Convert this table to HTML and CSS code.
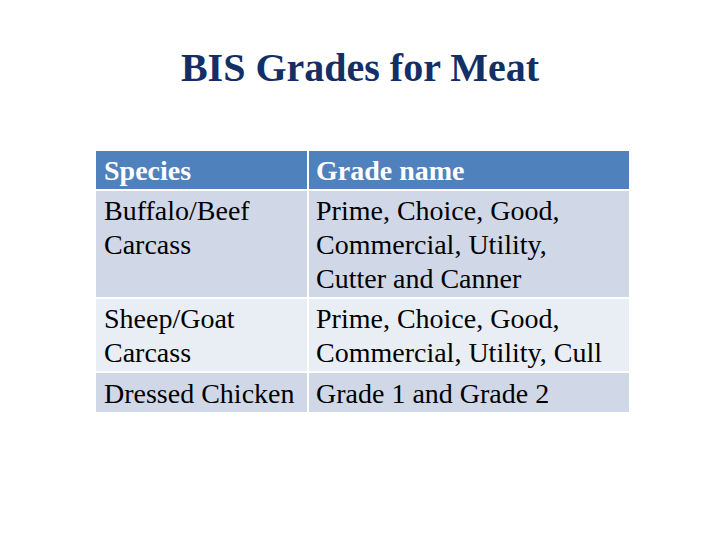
FILE: index.html
```html
<!DOCTYPE html>
<html>
<head>
<meta charset="utf-8">
<link rel="stylesheet" href="styles.css">
</head>
<body>
<div class="slide">
  <h1 class="title">BIS Grades for Meat</h1>
  <div class="table">
    <div class="cell head">Species</div>
    <div class="cell head">Grade name</div>
    <div class="cell dark">Buffalo/Beef<br>Carcass</div>
    <div class="cell dark">Prime, Choice, Good,<br>Commercial, Utility,<br>Cutter and Canner</div>
    <div class="cell light">Sheep/Goat<br>Carcass</div>
    <div class="cell light">Prime, Choice, Good,<br>Commercial, Utility, Cull</div>
    <div class="cell dark last">Dressed Chicken</div>
    <div class="cell dark last">Grade 1 and Grade 2</div>
  </div>
</div>
</body>
</html>
```
FILE: styles.css
```css
html, body {
  margin: 0;
  padding: 0;
  background: #ffffff;
}
.slide {
  width: 720px;
  height: 540px;
  display: flex;
  flex-direction: column;
  align-items: center;
  font-family: "Liberation Serif", "Times New Roman", serif;
}
.title {
  margin: 44px 0 0 0;
  height: 48px;
  line-height: 48px;
  font-size: 40px;
  font-weight: bold;
  color: #142f66;
}
.table {
  margin-top: 59px;
  margin-left: 5px;
  display: grid;
  grid-template-columns: 211px 320px;
  gap: 2px;
}
.cell {
  font-size: 28px;
  line-height: 34px;
  padding: 3px 4px 1px 8px;
  color: #000000;
}
.cell:nth-child(even) {
  padding-left: 7px;
}
.cell.last {
  padding-top: 4px;
  padding-bottom: 1px;
}
.head {
  background: #4f81bd;
  color: #ffffff;
  font-weight: bold;
}
.dark {
  background: #d0d8e8;
}
.light {
  background: #e9edf4;
}
```
